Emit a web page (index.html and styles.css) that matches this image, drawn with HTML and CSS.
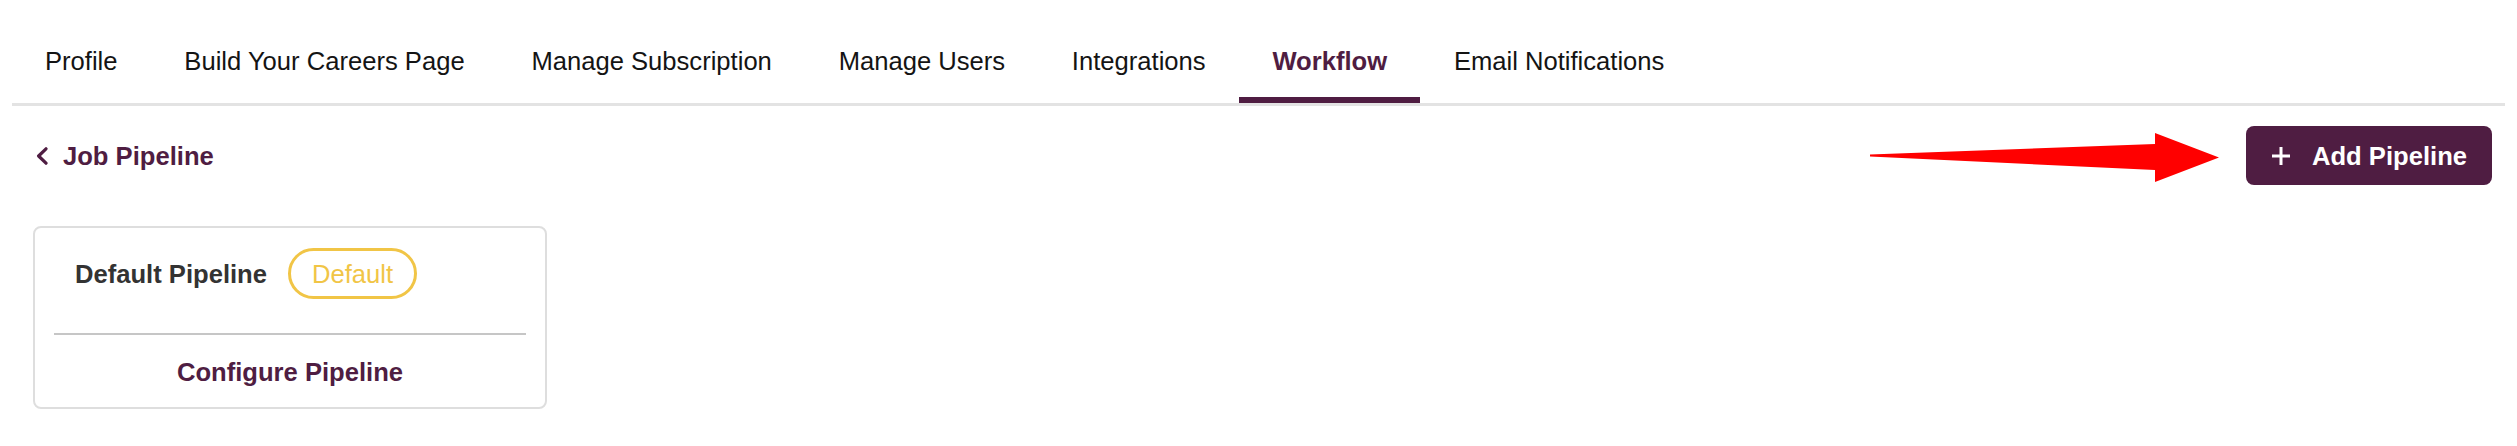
FILE: index.html
```html
<!DOCTYPE html>
<html lang="en">
<head>
<meta charset="utf-8">
<title>Workflow - Job Pipeline</title>
<link rel="stylesheet" href="styles.css">
</head>
<body>
<div class="page">
  <nav class="tabs">
    <a class="tab">Profile</a>
    <a class="tab">Build Your Careers Page</a>
    <a class="tab">Manage Subscription</a>
    <a class="tab">Manage Users</a>
    <a class="tab">Integrations</a>
    <a class="tab active">Workflow</a>
    <a class="tab">Email Notifications</a>
  </nav>
  <main class="content">
    <div class="toolbar">
      <a class="back">
        <svg class="chev" width="12" height="18" viewBox="0 0 12 18"><path d="M10 1.8 L2.6 9 L10 16.2" fill="none" stroke="currentColor" stroke-width="3.2" stroke-linecap="round" stroke-linejoin="round"/></svg>
        <span>Job Pipeline</span>
      </a>
      <button class="add-btn">
        <svg class="plus" width="20" height="20" viewBox="0 0 20 20"><path d="M10 1 V19 M1 10 H19" stroke="currentColor" stroke-width="3" fill="none"/></svg>
        <span>Add Pipeline</span>
      </button>
    </div>
    <div class="card">
      <div class="card-head">
        <span class="card-title">Default Pipeline</span>
        <span class="badge">Default</span>
      </div>
      <div class="divider"></div>
      <div class="card-foot">Configure Pipeline</div>
    </div>
  </main>
  <svg class="arrow" width="350" height="49" viewBox="0 0 350 49"><polygon points="0,21.5 285,11 285,0 349,24.5 285,49 285,37 0,23.5" fill="#ff0000"/></svg>
</div>
</body>
</html>
```
FILE: styles.css
```css
* { box-sizing: border-box; }
html, body { margin: 0; padding: 0; background: #ffffff; }
body {
  font-family: "Liberation Sans", Arial, Helvetica, sans-serif;
  font-size: 25.6px;
  line-height: 30px;
  color: #111111;
}
.page {
  position: relative;
  padding: 25px 12px 0;
}
.tabs {
  display: flex;
  border-bottom: 3px solid #e3e3e3;
}
.tab {
  padding: 21px 33.4px;
  border-bottom: 6px solid transparent;
  color: #141414;
  white-space: nowrap;
}
.tab:first-child { padding-left: 33px; }
.tab.active {
  color: #4f1d42;
  font-weight: bold;
  border-bottom-color: #4f1d42;
}
.content {
  padding: 0 13px 0 21px;
}
.toolbar {
  margin-top: 20px;
  display: flex;
  align-items: center;
  justify-content: space-between;
}
.back {
  display: flex;
  align-items: center;
  gap: 15px;
  margin-left: 3px;
  color: #4f1d42;
  font-weight: bold;
}
.chev { display: block; }
.add-btn {
  display: flex;
  align-items: center;
  gap: 21px;
  padding: 14.5px 25px;
  border: none;
  border-radius: 8px;
  background: #4f1d42;
  color: #ffffff;
  font: bold 25.6px/30px "Liberation Sans", Arial, Helvetica, sans-serif;
}
.plus { display: block; }
.card {
  margin-top: 41px;
  width: 514px;
  border: 2px solid #dedede;
  border-radius: 8px;
  padding: 0 19px;
}
.card-head {
  display: flex;
  align-items: center;
  gap: 21px;
  padding: 20px 0 0 21px;
}
.card-title {
  font-weight: bold;
  color: #333333;
}
.badge {
  padding: 7.5px 21px;
  border: 3px solid #f1c546;
  border-radius: 26px;
  color: #f1c546;
}
.divider {
  margin-top: 34px;
  height: 2px;
  background: #c6c6c6;
}
.card-foot {
  padding: 22px 0 20px;
  text-align: center;
  font-weight: bold;
  color: #4f1d42;
}
.arrow {
  position: absolute;
  left: 1870px;
  top: 133px;
}
```
